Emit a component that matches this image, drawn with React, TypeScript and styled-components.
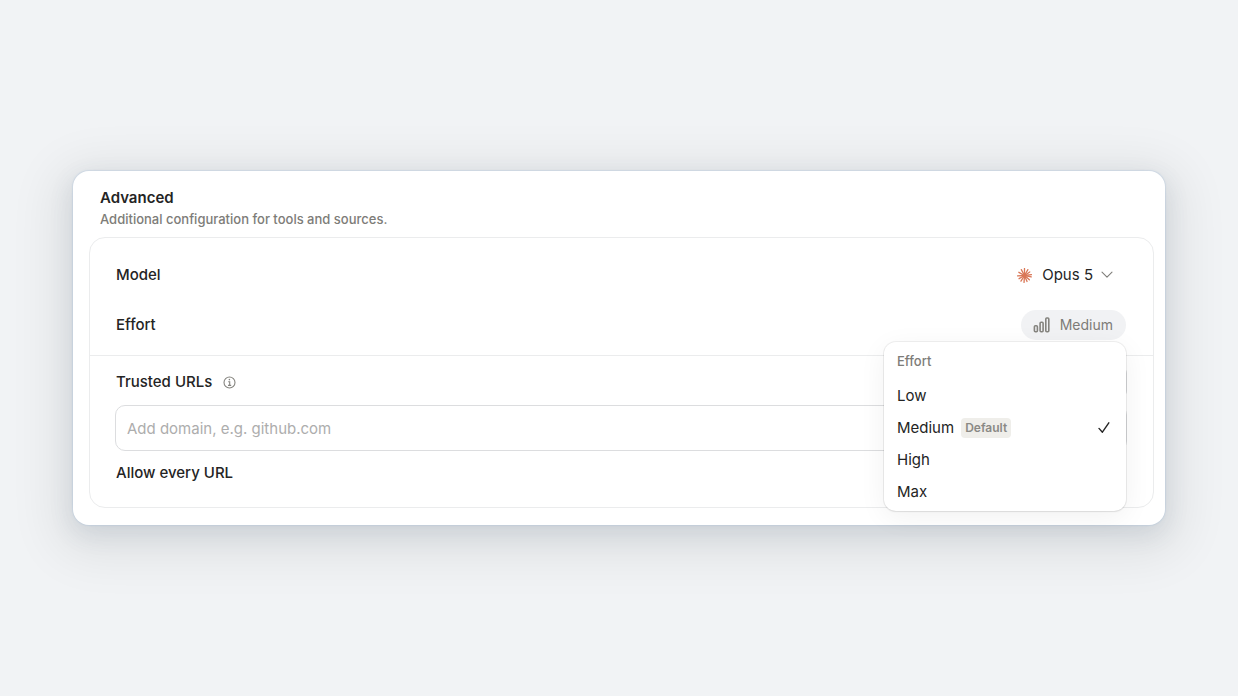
import React, { useState } from "react";
import styled, { createGlobalStyle } from "styled-components";

const GlobalStyle = createGlobalStyle`
  *, *::before, *::after { box-sizing: border-box; }
  body {
    margin: 0;
    background: #f1f3f5;
    color: #242424;
    font-family: Inter, "Liberation Sans", sans-serif;
    font-size: 15px;
    line-height: 24px;
  }
  button, input { font: inherit; color: inherit; }
`;

const Page = styled.main`
  min-height: 100vh;
  display: flex;
  align-items: center;
  padding: 24px 73px;
`;

const Card = styled.section`
  flex: 1;
  min-width: 0;
  padding: 15px 11px 17px 16px;
  background: #fff;
  border-radius: 16px;
  box-shadow:
    0 0 1px 1px rgba(170, 192, 218, 0.35),
    0 8px 24px rgba(70, 100, 125, 0.14),
    0 12px 48px 20px rgba(0, 0, 0, 0.07);
`;

const Header = styled.header`
  padding: 0 11px 9px;
`;

const Title = styled.h2`
  margin: 0;
  font-size: 15px;
  font-weight: 600;
  line-height: 24px;
`;

const Subtitle = styled.p`
  margin: 0;
  font-size: 13px;
  font-weight: 500;
  line-height: 18px;
  color: #7d7c78;
`;

const Panel = styled.div`
  border: 1px solid #ebeced;
  border-radius: 16px;
`;

const Group = styled.div<{ $divided?: boolean }>`
  display: flex;
  flex-direction: column;
  padding: ${(p) => (p.$divided ? "14px 26px 22px 25px" : "12px 26px 5px 25px")};
  border-top: ${(p) => (p.$divided ? "1px solid #ebeced" : "none")};
`;

const Row = styled.div<{ $tall?: boolean }>`
  display: flex;
  align-items: center;
  justify-content: space-between;
  height: ${(p) => (p.$tall ? 50 : 24)}px;
  padding: ${(p) => (p.$tall ? "0 1px" : "0 0 0 1px")};
`;

const Label = styled.label`
  font-weight: 500;
`;

const LabelGroup = styled.div`
  display: flex;
  align-items: center;
  gap: 11px;
`;

const IconButton = styled.button`
  display: flex;
  padding: 0;
  border: 0;
  background: none;
  color: #85847f;
`;

const Picker = styled.button<{ $filled?: boolean }>`
  display: flex;
  align-items: center;
  gap: 8px;
  height: 30px;
  padding: 0 13px 0 12px;
  border: 0;
  border-radius: 15px;
  background: ${(p) => (p.$filled ? "#f1f2f4" : "transparent")};
  color: ${(p) => (p.$filled ? "#7d7c78" : "#242424")};
  font-size: ${(p) => (p.$filled ? 14 : 15)}px;
  cursor: pointer;
  svg:first-child { margin-right: 2px; }
`;

const PickerAnchor = styled.div`
  position: relative;
`;

const OutlineButton = styled.button`
  width: 96px;
  height: 30px;
  border: 1px solid #dcdddf;
  border-radius: 6px;
  background: #fff;
`;

const DomainInput = styled.input`
  width: 100%;
  height: 46px;
  margin: 11px 0 10px;
  padding: 0 11px;
  border: 1px solid #dcdddf;
  border-radius: 10px;
  background: #fff;
  outline: none;
  &::placeholder { color: #adadad; opacity: 1; }
`;

const Menu = styled.div`
  position: absolute;
  z-index: 1;
  top: calc(100% + 2px);
  right: 0;
  width: 242px;
  padding: 4px 4px 3px;
  background: #fff;
  border-radius: 12px;
  box-shadow:
    0 0 0 1px rgba(0, 0, 0, 0.06),
    0 1px 2px rgba(0, 0, 0, 0.06),
    0 6px 28px rgba(0, 0, 0, 0.06);
`;

const MenuHeading = styled.div`
  padding: 0 9px 4px;
  font-size: 13px;
  font-weight: 500;
  line-height: 30px;
  color: #7d7c78;
`;

const MenuItem = styled.button`
  display: flex;
  align-items: center;
  gap: 7px;
  width: 100%;
  height: 32px;
  padding: 0 12px 0 9px;
  border: 0;
  border-radius: 8px;
  background: none;
  text-align: left;
  cursor: pointer;
  svg { margin-left: auto; }
`;

const Badge = styled.span`
  padding: 0 4px;
  border-radius: 4px;
  background: #efeeea;
  color: #8a8985;
  font-size: 12px;
  font-weight: 600;
  line-height: 20px;
`;

const rays = [
  [8, 0.6], [11.6, 1.8], [13.6, 4.2], [15.4, 7], [15.2, 9.4], [13.2, 12.6],
  [10.7, 14.4], [7.5, 15.4], [4.2, 14], [2.2, 11.4], [0.6, 8.3], [2, 4.6], [4.6, 1.8],
];

function Burst() {
  return (
    <svg width="15" height="15" viewBox="0 0 16 16" stroke="#d97757" strokeWidth="1.4" strokeLinecap="round" aria-hidden="true">
      {rays.map(([x, y]) => (
        <line key={`${x}-${y}`} x1="8" y1="8" x2={x} y2={y} />
      ))}
    </svg>
  );
}

function Chevron() {
  return (
    <svg width="12" height="12" viewBox="0 0 12 12" fill="none" stroke="#7f7e7a" strokeWidth="1.1" strokeLinecap="round" strokeLinejoin="round" aria-hidden="true">
      <path d="M1 3.2 6 8.2l5-5" />
    </svg>
  );
}

function Bars() {
  return (
    <svg width="17" height="17" viewBox="0 0 17 17" fill="none" stroke="#85847f" strokeWidth="1.6" aria-hidden="true">
      <rect x="1.4" y="8.8" width="3" height="6" rx="1" />
      <rect x="7.1" y="5.2" width="3" height="9.6" rx="1" />
      <rect x="12.8" y="1" width="3" height="13.8" rx="1" />
    </svg>
  );
}

function Info() {
  return (
    <svg width="13" height="13" viewBox="0 0 13 13" fill="none" stroke="currentColor" strokeWidth="1.1" aria-hidden="true">
      <circle cx="6.5" cy="6.5" r="5.5" />
      <path d="M5.2 5.7h1.5v3.6M5 9.4h3.2" />
      <circle cx="6.4" cy="3.6" r="0.8" fill="currentColor" stroke="none" />
    </svg>
  );
}

function Check() {
  return (
    <svg width="12" height="12" viewBox="0 0 12 12" fill="none" stroke="#242424" strokeWidth="1.4" strokeLinecap="round" strokeLinejoin="round" aria-hidden="true">
      <path d="M1 6.4 4.4 10.2 10.8 0.8" />
    </svg>
  );
}

const levels = ["Low", "Medium", "High", "Max"];

export default function App() {
  const [effort, setEffort] = useState("Medium");
  const [domain, setDomain] = useState("");

  return (
    <>
      <GlobalStyle />
      <Page>
        <Card aria-labelledby="advanced-title">
          <Header>
            <Title id="advanced-title">Advanced</Title>
            <Subtitle>Additional configuration for tools and sources.</Subtitle>
          </Header>
          <Panel>
            <Group>
              <Row $tall>
                <Label htmlFor="model">Model</Label>
                <Picker id="model" type="button">
                  <Burst />
                  Opus 5
                  <Chevron />
                </Picker>
              </Row>
              <Row $tall>
                <Label htmlFor="effort">Effort</Label>
                <PickerAnchor>
                  <Picker id="effort" type="button" $filled aria-haspopup="menu" aria-expanded="true">
                    <Bars />
                    {effort}
                  </Picker>
                  <Menu role="menu" aria-labelledby="effort-heading">
                    <MenuHeading id="effort-heading">Effort</MenuHeading>
                    {levels.map((level) => (
                      <MenuItem
                        key={level}
                        type="button"
                        role="menuitemradio"
                        aria-checked={level === effort}
                        onClick={() => setEffort(level)}
                      >
                        {level}
                        {level === "Medium" && <Badge>Default</Badge>}
                        {level === effort && <Check />}
                      </MenuItem>
                    ))}
                  </Menu>
                </PickerAnchor>
              </Row>
            </Group>
            <Group $divided>
              <Row>
                <LabelGroup>
                  <Label htmlFor="domain">Trusted URLs</Label>
                  <IconButton type="button" aria-label="About trusted URLs">
                    <Info />
                  </IconButton>
                </LabelGroup>
                <OutlineButton type="button" aria-label="Import URLs" />
              </Row>
              <DomainInput
                id="domain"
                placeholder="Add domain, e.g. github.com"
                value={domain}
                onChange={(e) => setDomain(e.target.value)}
              />
              <Row>
                <Label as="span">Allow every URL</Label>
              </Row>
            </Group>
          </Panel>
        </Card>
      </Page>
    </>
  );
}
